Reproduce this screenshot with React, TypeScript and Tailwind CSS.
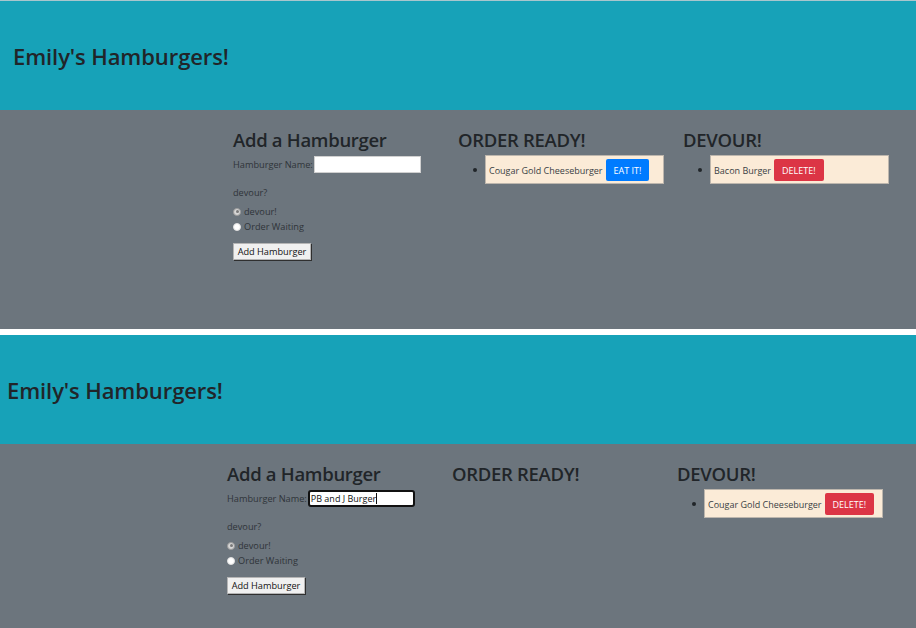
import React from "react";

const font = { fontFamily: '"Open Sans", "Noto Sans", sans-serif' };

function Item({ name, label, kind }: { name: string; label: string; kind: "eat" | "del" }) {
  return (
    <li className="flex items-center">
      <span className="w-[4px] h-[4px] rounded-full bg-[#212529] ml-[15px] mr-[8px] shrink-0" />
      <div className="flex items-center h-[29px] w-[179px] shrink-0 bg-[#fbebd7] border border-[#bdb6ad] pl-[3px] pt-[1px]">
        <span className="text-[9px] text-[#3a3f44] leading-none whitespace-nowrap">{name}</span>
        <span
          className={
            kind === "eat"
              ? "ml-[3px] h-[22px] px-[8px] flex items-center rounded-[2px] bg-[#007bff] text-white text-[9px] leading-none whitespace-nowrap"
              : "ml-[3px] h-[22px] px-[8px] flex items-center rounded-[2px] bg-[#dc3545] text-white text-[9px] leading-none whitespace-nowrap"
          }
        >
          {label}
        </span>
      </div>
    </li>
  );
}

function Screen({ second }: { second: boolean }) {
  return (
    <div className="flex flex-col">
      <div className={second ? "h-[109px] bg-[#17a2b8] flex items-center pl-[7px]" : "h-[109px] bg-[#17a2b8] flex items-center pl-[13px]"}>
        <h1 className="text-[22px] leading-none text-[#212529] font-semibold tracking-[-0.1px]">Emily's Hamburgers!</h1>
      </div>
      <div className={second ? "h-[184px] bg-[#6c757d] flex pl-[227px] pt-[18px]" : "h-[219px] bg-[#6c757d] flex pl-[233px] pt-[18px]"}>
        <div className="w-[225px] flex flex-col">
          <h2 className="text-[18.5px] leading-[24px] text-[#212529] font-semibold tracking-[-0.3px]">Add a Hamburger</h2>
          <div className="mt-[4px] flex items-center h-[17px]">
            <span className="text-[9.2px] text-[#2f3439] leading-none mr-[1px] whitespace-nowrap">Hamburger Name:</span>
            {second ? (
              <div className="w-[107px] h-[17px] shrink-0 bg-white border-2 border-[#111] rounded-[3px] flex items-center pl-[1px]">
                <span className="text-[9px] text-[#111] leading-none whitespace-nowrap">PB and J Burger</span>
                <span className="w-[1px] h-[11px] bg-[#111]" />
              </div>
            ) : (
              <div className="w-[107px] h-[17px] shrink-0 bg-white border border-[#d0d0d0]" />
            )}
          </div>
          <div className="mt-[12px] h-[15px] flex items-center text-[9.2px] text-[#2f3439] leading-none">devour?</div>
          <div className="mt-[4px] h-[15px] flex items-center">
            <span className="w-[8px] h-[8px] rounded-full bg-[#d6d6d6] border border-[#9a9a9a] flex items-center justify-center">
              <span className="w-[3px] h-[3px] rounded-full bg-[#7a7a7a]" />
            </span>
            <span className="ml-[3px] text-[9.2px] text-[#2f3439] leading-none">devour!</span>
          </div>
          <div className="h-[15px] flex items-center">
            <span className="w-[8px] h-[8px] rounded-full bg-white border border-[#e0e0e0]" />
            <span className="ml-[3px] text-[9.2px] text-[#2f3439] leading-none">Order Waiting</span>
          </div>
          <div className="mt-[9px] flex">
            <div className="flex items-center justify-center w-[78px] h-[17px] bg-[#f0f0f0] border border-[#b5b5b5] shadow-[1px_1px_0_#2f2f2f] text-[9.2px] text-[#111] leading-none whitespace-nowrap">
              Add Hamburger
            </div>
          </div>
        </div>
        <div className="w-[225px] flex flex-col">
          <h2 className="text-[18.5px] leading-[24px] text-[#212529] font-semibold tracking-[-0.3px]">ORDER READY!</h2>
          {!second && (
            <ul className="mt-[3px]">
              <Item name="Cougar Gold Cheeseburger" label="EAT IT!" kind="eat" />
            </ul>
          )}
        </div>
        <div className="w-[225px] flex flex-col">
          <h2 className="text-[18.5px] leading-[24px] text-[#212529] font-semibold tracking-[-0.3px]">DEVOUR!</h2>
          <ul className="mt-[3px]">
            {second ? (
              <Item name="Cougar Gold Cheeseburger" label="DELETE!" kind="del" />
            ) : (
              <Item name="Bacon Burger" label="DELETE!" kind="del" />
            )}
          </ul>
        </div>
      </div>
    </div>
  );
}

export default function App() {
  return (
    <div className="w-[916px] h-[628px] overflow-hidden bg-white flex flex-col" style={font}>
      <div className="h-[1px] bg-[#a9c6cd]" />
      <Screen second={false} />
      <div className="h-[6px] bg-white" />
      <Screen second={true} />
    </div>
  );
}
